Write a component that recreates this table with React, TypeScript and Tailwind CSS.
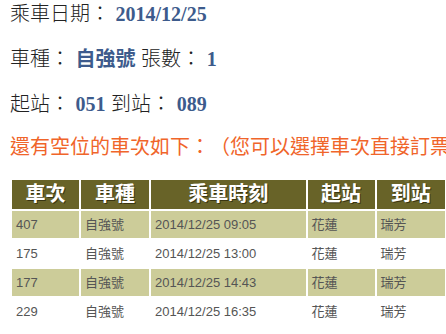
const rows = [
  { no: '407', type: '自強號', time: '2014/12/25 09:05', from: '花蓮', to: '瑞芳' },
  { no: '175', type: '自強號', time: '2014/12/25 13:00', from: '花蓮', to: '瑞芳' },
  { no: '177', type: '自強號', time: '2014/12/25 14:43', from: '花蓮', to: '瑞芳' },
  { no: '229', type: '自強號', time: '2014/12/25 16:35', from: '花蓮', to: '瑞芳' },
];

const cjk = "font-['Liberation_Sans','Noto_Sans_CJK_TC',sans-serif]";
const val = "font-['Liberation_Serif','Noto_Sans_CJK_TC',serif] font-bold text-[#3d5b8c]";

export default function App() {
  return (
    <div className={`w-[446px] h-[334px] overflow-hidden bg-white pl-[10px] ${cjk} [text-spacing-trim:space-all]`}>
      {/* ── Summary ─────────────────────────── */}
      <div className="pt-[1px] text-[20px] leading-[26px] text-[#222] font-light">
        <p>乘車日期：&nbsp;<span className={val}>2014/12/25</span></p>
        <p className="mt-[19px]">
          車種：&nbsp;<span className="font-bold text-[#3d5b8c]">自強號</span> 張數：&nbsp;<span className={val}>1</span>
        </p>
        <p className="mt-[19px]">
          起站：&nbsp;<span className={val}>051</span> 到站：&nbsp;<span className={val}>089</span>
        </p>
        <p className="mt-[17px] whitespace-nowrap font-normal text-[#f0652a] [text-spacing-trim:space-all]">
          還有空位的車次如下：（您可以選擇車次直接訂票）
        </p>
      </div>

      {/* ── Train table ─────────────────────── */}
      <table className="mt-[18px] border-separate border-spacing-[2px] table-fixed w-[520px]">
        <colgroup>
          <col className="w-[66px]" />
          <col className="w-[67px]" />
          <col className="w-[152px]" />
          <col className="w-[66px]" />
          <col className="w-[67px]" />
          <col className="w-[80px]" />
        </colgroup>
        <thead>
          <tr className="bg-[#686328] text-white text-[20px] font-bold h-[29px]">
            {['車次', '車種', '乘車時刻', '起站', '到站', '訂票'].map((h) => (
              <th key={h} className="p-0 leading-[29px] text-center [text-shadow:1px_1px_0_#3a3612]">
                {h}
              </th>
            ))}
          </tr>
        </thead>
        <tbody>
          {rows.map((r, i) => (
            <tr
              key={r.no}
              className={`h-[27px] text-[13px] text-[#555] ${i % 2 === 0 ? 'bg-[#cccc99]' : 'bg-white'}`}
            >
              <td className="px-1 py-0">{r.no}</td>
              <td className="px-1 py-0">{r.type}</td>
              <td className="px-1 py-0">{r.time}</td>
              <td className="px-1 py-0">{r.from}</td>
              <td className="px-1 py-0">{r.to}</td>
              <td className="px-1 py-0"></td>
            </tr>
          ))}
        </tbody>
      </table>
    </div>
  );
}
